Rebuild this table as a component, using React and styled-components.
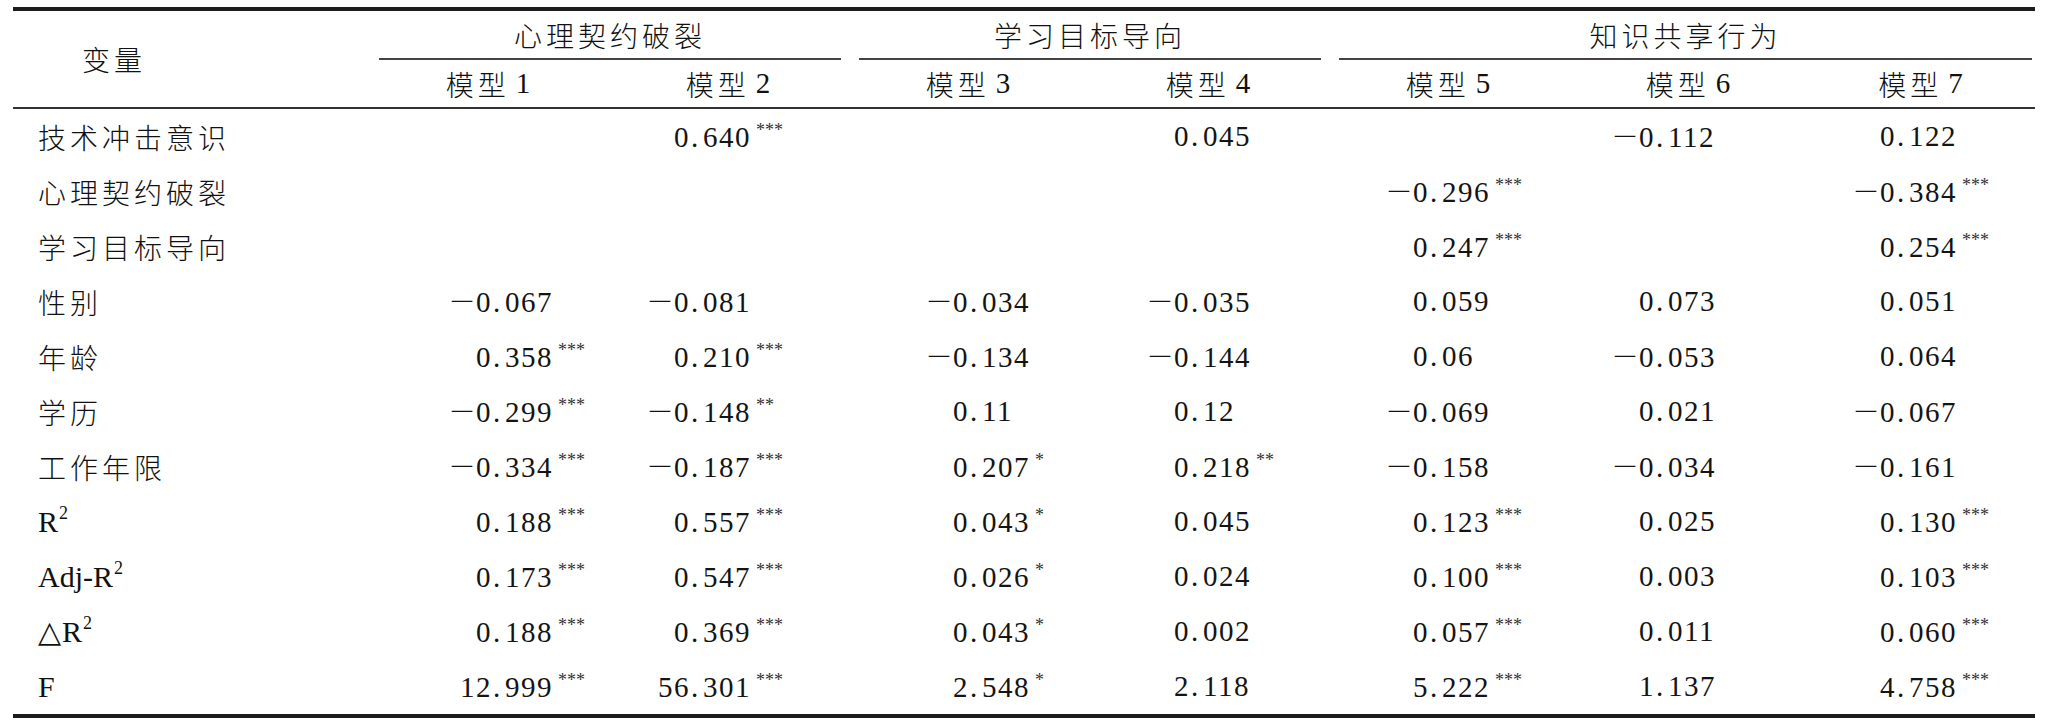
import React from "react";
import styled, { createGlobalStyle } from "styled-components";

const COLS = "357px 240px 240px 240px 240px 240px 240px 225px";

const CJK = `"Noto Sans CJK SC", "Noto Sans CJK TC", sans-serif`;
const SERIF = `"Liberation Serif", "Times New Roman", serif`;

const GlobalStyle = createGlobalStyle`
  body {
    margin: 0;
    background: #ffffff;
    color: #111111;
  }
`;

const Table = styled.div`
  margin: 7px 0 0 13px;
  width: 2022px;
  border-top: 4px solid #1c1c1c;
  border-bottom: 4px solid #1c1c1c;
`;

const Head = styled.div`
  display: grid;
  grid-template-columns: ${COLS};
  grid-template-rows: 49px 47px;
  border-bottom: 2px solid #333333;
`;

const CornerLabel = styled.div`
  grid-row: 1 / span 2;
  grid-column: 1;
  align-self: center;
  padding-left: 69px;
  font-family: ${CJK};
  font-size: 28px;
  font-weight: 300;
  letter-spacing: 4px;
`;

const GroupTitle = styled.div`
  grid-row: 1;
  grid-column: span ${(p) => p.$span};
  margin: 0 ${(p) => (p.$last ? 3 : 9)}px 0 9px;
  display: flex;
  align-items: center;
  justify-content: center;
  border-bottom: 2px solid #444444;
  font-family: ${CJK};
  font-size: 28px;
  font-weight: 300;
  letter-spacing: 4px;
`;

const ModelTitle = styled.div`
  grid-row: 2;
  display: flex;
  align-items: center;
  justify-content: center;
  font-family: ${CJK};
  font-size: 28px;
  font-weight: 300;
  letter-spacing: 4px;
  span {
    font-family: ${SERIF};
    font-size: 29px;
    margin-left: 6px;
  }
`;

const Row = styled.div`
  display: grid;
  grid-template-columns: ${COLS};
  height: 55px;
`;

const Label = styled.div`
  display: flex;
  align-items: center;
  padding-left: 25px;
  font-family: ${(p) => (p.$latin ? SERIF : CJK)};
  font-size: ${(p) => (p.$latin ? 30 : 28)}px;
  font-weight: ${(p) => (p.$latin ? 400 : 300)};
  letter-spacing: ${(p) => (p.$latin ? 0 : 4)}px;
  white-space: nowrap;
`;

const LatinText = styled.span`
  line-height: 1;
  sup {
    font-size: 18px;
    margin-left: 1px;
    vertical-align: 13px;
    line-height: 0;
  }
`;

const Tri = styled.span`
  font-family: "DejaVu Sans", sans-serif;
  font-size: 30px;
  margin-right: 1px;
`;

const Cell = styled.div`
  display: flex;
  align-items: center;
  padding-left: ${(p) => p.$pad}px;
  white-space: nowrap;
`;

const Num = styled.div`
  font-family: ${SERIF};
  font-size: 29px;
  line-height: 1;
  color: #141414;
`;

const IntPart = styled.span`
  display: inline-block;
  width: 70px;
  text-align: right;
  letter-spacing: 1.5px;
`;

const Sign = styled.span`
  font-family: ${CJK};
  font-size: 28px;
  font-weight: 300;
  letter-spacing: 0;
`;

const Dot = styled.span`
  display: inline-block;
  width: 12px;
  padding-left: 1px;
`;

const Frac = styled.span`
  letter-spacing: 1.5px;
`;

const Stars = styled.span`
  font-size: 18px;
  margin-left: 5px;
  vertical-align: 11px;
  color: #333333;
`;

// left padding of each model column so the decimal points line up like the table
const PADS = [52, 10, 49, 30, 29, 15, 16];

const GROUPS = [
  { title: "心理契约破裂", span: 2 },
  { title: "学习目标导向", span: 2 },
  { title: "知识共享行为", span: 3, last: true },
];

const ROWS = [
  { label: "技术冲击意识", vals: [null, "0.640***", null, "0.045", null, "-0.112", "0.122"] },
  { label: "心理契约破裂", vals: [null, null, null, null, "-0.296***", null, "-0.384***"] },
  { label: "学习目标导向", vals: [null, null, null, null, "0.247***", null, "0.254***"] },
  { label: "性别", vals: ["-0.067", "-0.081", "-0.034", "-0.035", "0.059", "0.073", "0.051"] },
  { label: "年龄", vals: ["0.358***", "0.210***", "-0.134", "-0.144", "0.06", "-0.053", "0.064"] },
  { label: "学历", vals: ["-0.299***", "-0.148**", "0.11", "0.12", "-0.069", "0.021", "-0.067"] },
  { label: "工作年限", vals: ["-0.334***", "-0.187***", "0.207*", "0.218**", "-0.158", "-0.034", "-0.161"] },
  { label: "R", sup: "2", latin: true, vals: ["0.188***", "0.557***", "0.043*", "0.045", "0.123***", "0.025", "0.130***"] },
  { label: "Adj-R", sup: "2", latin: true, vals: ["0.173***", "0.547***", "0.026*", "0.024", "0.100***", "0.003", "0.103***"] },
  { label: "R", sup: "2", tri: true, latin: true, vals: ["0.188***", "0.369***", "0.043*", "0.002", "0.057***", "0.011", "0.060***"] },
  { label: "F", latin: true, vals: ["12.999***", "56.301***", "2.548*", "2.118", "5.222***", "1.137", "4.758***"] },
];

function Value({ text }) {
  if (!text) return null;
  const m = text.match(/^(-?)(\d+)\.(\d+)(\**)$/);
  const [, neg, int, frac, stars] = m;
  return (
    <Num>
      <IntPart>
        {neg && <Sign>－</Sign>}
        {int}
      </IntPart>
      <Dot>.</Dot>
      <Frac>{frac}</Frac>
      {stars && <Stars>{stars}</Stars>}
    </Num>
  );
}

export default function App() {
  return (
    <>
      <GlobalStyle />
      <Table>
        <Head>
          <CornerLabel>变量</CornerLabel>
          {GROUPS.map((g) => (
            <GroupTitle key={g.title} $span={g.span} $last={g.last}>
              {g.title}
            </GroupTitle>
          ))}
          {PADS.map((_, i) => (
            <ModelTitle key={i}>
              模型<span>{i + 1}</span>
            </ModelTitle>
          ))}
        </Head>
        {ROWS.map((r, i) => (
          <Row key={i}>
            <Label $latin={r.latin}>
              {r.latin ? (
                <LatinText>
                  {r.tri && <Tri>△</Tri>}
                  {r.label}
                  {r.sup && <sup>{r.sup}</sup>}
                </LatinText>
              ) : (
                r.label
              )}
            </Label>
            {r.vals.map((v, j) => (
              <Cell key={j} $pad={PADS[j]}>
                <Value text={v} />
              </Cell>
            ))}
          </Row>
        ))}
      </Table>
    </>
  );
}
